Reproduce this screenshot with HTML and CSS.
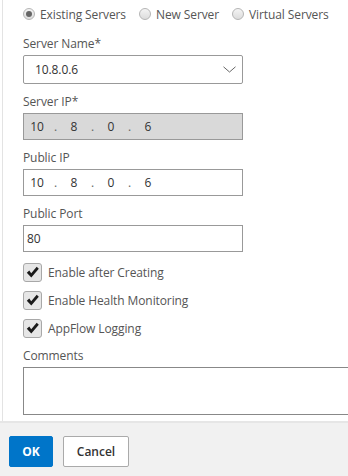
FILE: index.html
```html
<!DOCTYPE html>
<html lang="en">
<head>
  <meta charset="UTF-8">
  <meta name="viewport" content="width=device-width, initial-scale=1.0">
  <title>Create Service - Server</title>
  <link rel="stylesheet" href="styles.css">
</head>
<body>

<div class="panel">
  <div class="radios">
    <label class="radio"><span class="dot-box checked"></span>Existing Servers</label>
    <label class="radio"><span class="dot-box"></span>New Server</label>
    <label class="radio"><span class="dot-box"></span>Virtual Servers</label>
  </div>

  <div class="field">
    <label>Server Name*</label>
    <div class="select">
      <span>10.8.0.6</span>
      <svg class="chevron" width="13" height="7" viewBox="0 0 13 7"><polyline points="0.5,0.8 6.5,6 12.5,0.8" fill="none" stroke="#666" stroke-width="1"/></svg>
    </div>
  </div>

  <div class="field">
    <label>Server IP*</label>
    <div class="ip disabled">
      <span class="oct">10</span><span class="sep">.</span><span class="oct">8</span><span class="sep">.</span><span class="oct">0</span><span class="sep">.</span><span class="oct">6</span>
    </div>
  </div>

  <div class="field">
    <label>Public IP</label>
    <div class="ip">
      <span class="oct">10</span><span class="sep">.</span><span class="oct">8</span><span class="sep">.</span><span class="oct">0</span><span class="sep">.</span><span class="oct">6</span>
    </div>
  </div>

  <div class="field">
    <label>Public Port</label>
    <div class="text-input">80</div>
  </div>

  <div class="checks">
    <label class="check"><span class="box"><svg width="17" height="17" viewBox="0 0 17 17"><polygon points="2.8,8.8 5.3,6.6 7.2,9.2 12.7,2.8 14.8,4.8 7.3,13.6" fill="#1a1a1a"/></svg></span>Enable after Creating</label>
    <label class="check"><span class="box"><svg width="17" height="17" viewBox="0 0 17 17"><polygon points="2.8,8.8 5.3,6.6 7.2,9.2 12.7,2.8 14.8,4.8 7.3,13.6" fill="#1a1a1a"/></svg></span>Enable Health Monitoring</label>
    <label class="check"><span class="box"><svg width="17" height="17" viewBox="0 0 17 17"><polygon points="2.8,8.8 5.3,6.6 7.2,9.2 12.7,2.8 14.8,4.8 7.3,13.6" fill="#1a1a1a"/></svg></span>AppFlow Logging</label>
  </div>

  <div class="field comments">
    <label>Comments</label>
    <div class="textarea"></div>
  </div>
</div>

<footer>
  <button class="btn primary">OK</button>
  <button class="btn">Cancel</button>
</footer>

</body>
</html>
```

FILE: styles.css
```css
body {
  font-family: 'Open Sans', 'Liberation Sans', sans-serif;
  font-size: 12px;
  letter-spacing: -0.1px;
  color: #555;
  background: #fff;
  margin: 0;
  width: 348px;
  height: 476px;
  overflow: hidden;
}

.panel {
  margin-left: 2px;
  border-left: 1px solid #e3e3e3;
  padding: 6px 0 6px 20px;
  height: 409px;
}

.radios {
  display: flex;
  gap: 13px;
  height: 16px;
  align-items: center;
}

.radio {
  display: flex;
  align-items: center;
  gap: 5px;
  color: #555;
}

.dot-box {
  width: 10px;
  height: 10px;
  border: 1px solid #b5b5b5;
  border-radius: 50%;
  background: linear-gradient(#f4f4f4, #dcdcdc);
  position: relative;
}

.dot-box.checked::after {
  content: "";
  position: absolute;
  left: 2px;
  top: 2px;
  width: 6px;
  height: 6px;
  border-radius: 50%;
  background: #666;
}

.field {
  margin-top: 14px;
  display: flex;
  flex-direction: column;
  gap: 3px;
}

.field + .field {
  margin-top: 10px;
}

.field label {
  line-height: 16px;
}

.select, .ip, .text-input {
  box-sizing: border-box;
  width: 220px;
  border: 1px solid #999;
  background: #fff;
  color: #333;
  display: flex;
  align-items: center;
}

.select {
  height: 29px;
  padding: 0 6px 0 11px;
  justify-content: space-between;
  border-radius: 2px;
}

.ip, .text-input {
  height: 27px;
}

.ip {
  padding-left: 1px;
}

.ip.disabled {
  background: #d9d9d9;
}

.oct {
  width: 24px;
  text-align: center;
}

.sep {
  width: 13px;
  text-align: center;
  color: #666;
}

.text-input {
  padding-left: 3px;
}

.checks {
  margin-top: 11px;
  display: flex;
  flex-direction: column;
  gap: 9px;
}

.check {
  display: flex;
  align-items: center;
  gap: 6px;
  height: 19px;
}

.box {
  box-sizing: border-box;
  width: 19px;
  height: 19px;
  border: 1px solid #a8a8a8;
  border-radius: 3px;
  background: #e6e6e6;
  display: flex;
  align-items: center;
  justify-content: center;
}

.field.comments {
  margin-top: 10px;
}

.textarea {
  box-sizing: border-box;
  width: 340px;
  height: 48px;
  border: 1px solid #888;
  background: #fff;
}

footer {
  border-top: 2px solid #e6e6e6;
  background: #f1f1f1;
  height: 60px;
  padding: 13px 0 0 9px;
  box-sizing: border-box;
  display: flex;
  gap: 10px;
  align-items: flex-start;
}

.btn {
  font-family: 'Open Sans', 'Liberation Sans', sans-serif;
  font-size: 12px;
  font-weight: 600;
  height: 31px;
  width: 66px;
  border: 1px solid #aaa;
  border-radius: 2px;
  background: #fff;
  color: #333;
  padding: 0;
}

.btn.primary {
  width: 44px;
  background: #0075c9;
  border-color: #0075c9;
  color: #fff;
  font-weight: 700;
}
```
